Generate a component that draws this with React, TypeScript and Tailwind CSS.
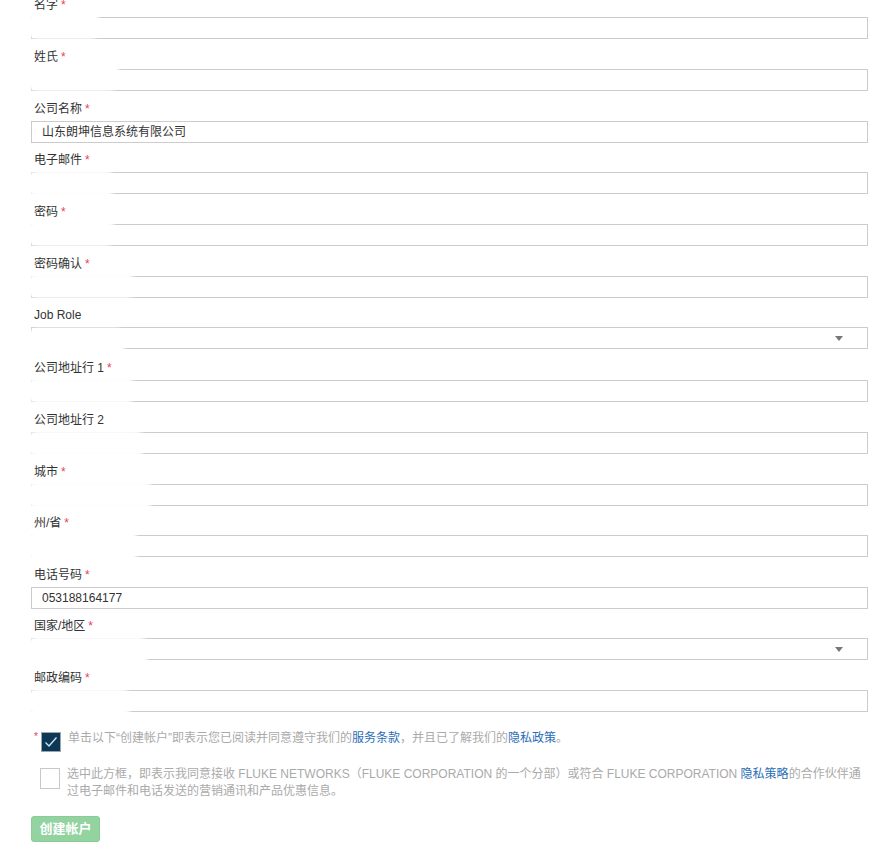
import React from "react";

type Field = {
  label: string;
  required?: boolean;
  value?: string;
  select?: boolean;
  mb: number;
  blob?: { w: number; top: number; h: number };
};

const fields: Field[] = [
  { label: "名字", required: true, mb: 7, blob: { w: 76, top: -4, h: 25 } },
  { label: "姓氏", required: true, mb: 7, blob: { w: 94, top: -7, h: 28 } },
  { label: "公司名称", required: true, value: "山东朗坤信息系统有限公司", mb: 6 },
  { label: "电子邮件", required: true, mb: 7, blob: { w: 91, top: -2, h: 25 } },
  { label: "密码", required: true, mb: 7, blob: { w: 91, top: -4, h: 25 } },
  { label: "密码确认", required: true, mb: 6, blob: { w: 111, top: -3, h: 24 } },
  { label: "Job Role", select: true, mb: 8, blob: { w: 101, top: 0, h: 25 } },
  { label: "公司地址行 1", required: true, mb: 7, blob: { w: 111, top: -3, h: 25 } },
  { label: "公司地址行 2", mb: 7, blob: { w: 121, top: -2, h: 25 } },
  { label: "城市", required: true, mb: 6, blob: { w: 129, top: -3, h: 26 } },
  { label: "州/省", required: true, mb: 7, blob: { w: 114, top: -4, h: 28 } },
  { label: "电话号码", required: true, value: "053188164177", mb: 6 },
  { label: "国家/地区", required: true, select: true, mb: 7, blob: { w: 124, top: -2, h: 27 } },
  { label: "邮政编码", required: true, mb: 0, blob: { w: 107, top: -2, h: 26 } },
];

const font = { fontFamily: '"Liberation Sans", "Noto Sans CJK SC", sans-serif' };

export default function App() {
  return (
    <div className="w-[891px] h-[866px] bg-white overflow-hidden text-[12px] text-[#333]" style={font}>
      <div className="pl-[31px] pr-[23px] mt-[-6px]">
        {fields.map((f, i) => (
          <div key={i} className="relative" style={{ marginBottom: f.mb }}>
            <div className="h-[18px] leading-[22px] mb-[5px] pl-[3px] whitespace-nowrap">
              {f.label}
              {f.required && <span className="text-[#e8415a] ml-[3px]">*</span>}
            </div>
            <div className="relative h-[22px] border border-[#cccccc] bg-white flex items-center pl-[10px] leading-[20px]">
              {f.value && <span className="text-[#333]">{f.value}</span>}
              {f.select && (
                <span className="absolute right-[24px] top-[8px] w-0 h-0 border-l-[4px] border-r-[4px] border-t-[5px] border-l-transparent border-r-transparent border-t-[#777]" />
              )}
              {f.blob && (
                <div
                  className="absolute left-[-6px] rounded-[12px] bg-white blur-[1.5px]"
                  style={{ width: f.blob.w, top: f.blob.top, height: f.blob.h }}
                />
              )}
            </div>
          </div>
        ))}

        <div className="flex items-start mt-[20px] h-[21px]">
          <span className="text-[#e8415a] text-[10px] leading-[10px] mt-[0px] w-[10px] pl-[3px]">*</span>
          <div className="w-[20px] h-[20px] bg-[#0c3756] border border-[#9aa5ae] flex items-center justify-center">
            <svg width="16" height="16" viewBox="0 0 16 16" fill="none">
              <polyline points="2.5,8.5 6,12 13.5,3.5" stroke="#cfe3ef" strokeWidth="1.4" fill="none" />
            </svg>
          </div>
          <div className="ml-[7px] mt-[-2px] leading-[17px] text-[#aaaaaa]">
            单击以下“创建帐户”即表示您已阅读并同意遵守我们的<span className="text-[#2a6db5]">服务条款</span>，并且已了解我们的<span className="text-[#2a6db5]">隐私政策</span>。
          </div>
        </div>

        <div className="flex items-start mt-[15px] pl-[9px]">
          <div className="w-[20px] h-[21px] shrink-0 border border-[#c8c8c8] bg-white" />
          <div className="ml-[7px] mt-[-2px] leading-[17px] text-[#aaaaaa] w-[800px]">
            选中此方框，即表示我同意接收 FLUKE NETWORKS（FLUKE CORPORATION 的一个分部）或符合 FLUKE CORPORATION <span className="text-[#2a6db5]">隐私策略</span>的合作伙伴通过电子邮件和电话发送的营销通讯和产品优惠信息。
          </div>
        </div>

        <div className="mt-[16px]">
          <button className="w-[69px] h-[26px] rounded-[3px] bg-[#93d39f] border border-[#8acb97] text-white font-bold text-[13px] leading-[24px]" style={font}>
            创建帐户
          </button>
        </div>
      </div>
    </div>
  );
}
